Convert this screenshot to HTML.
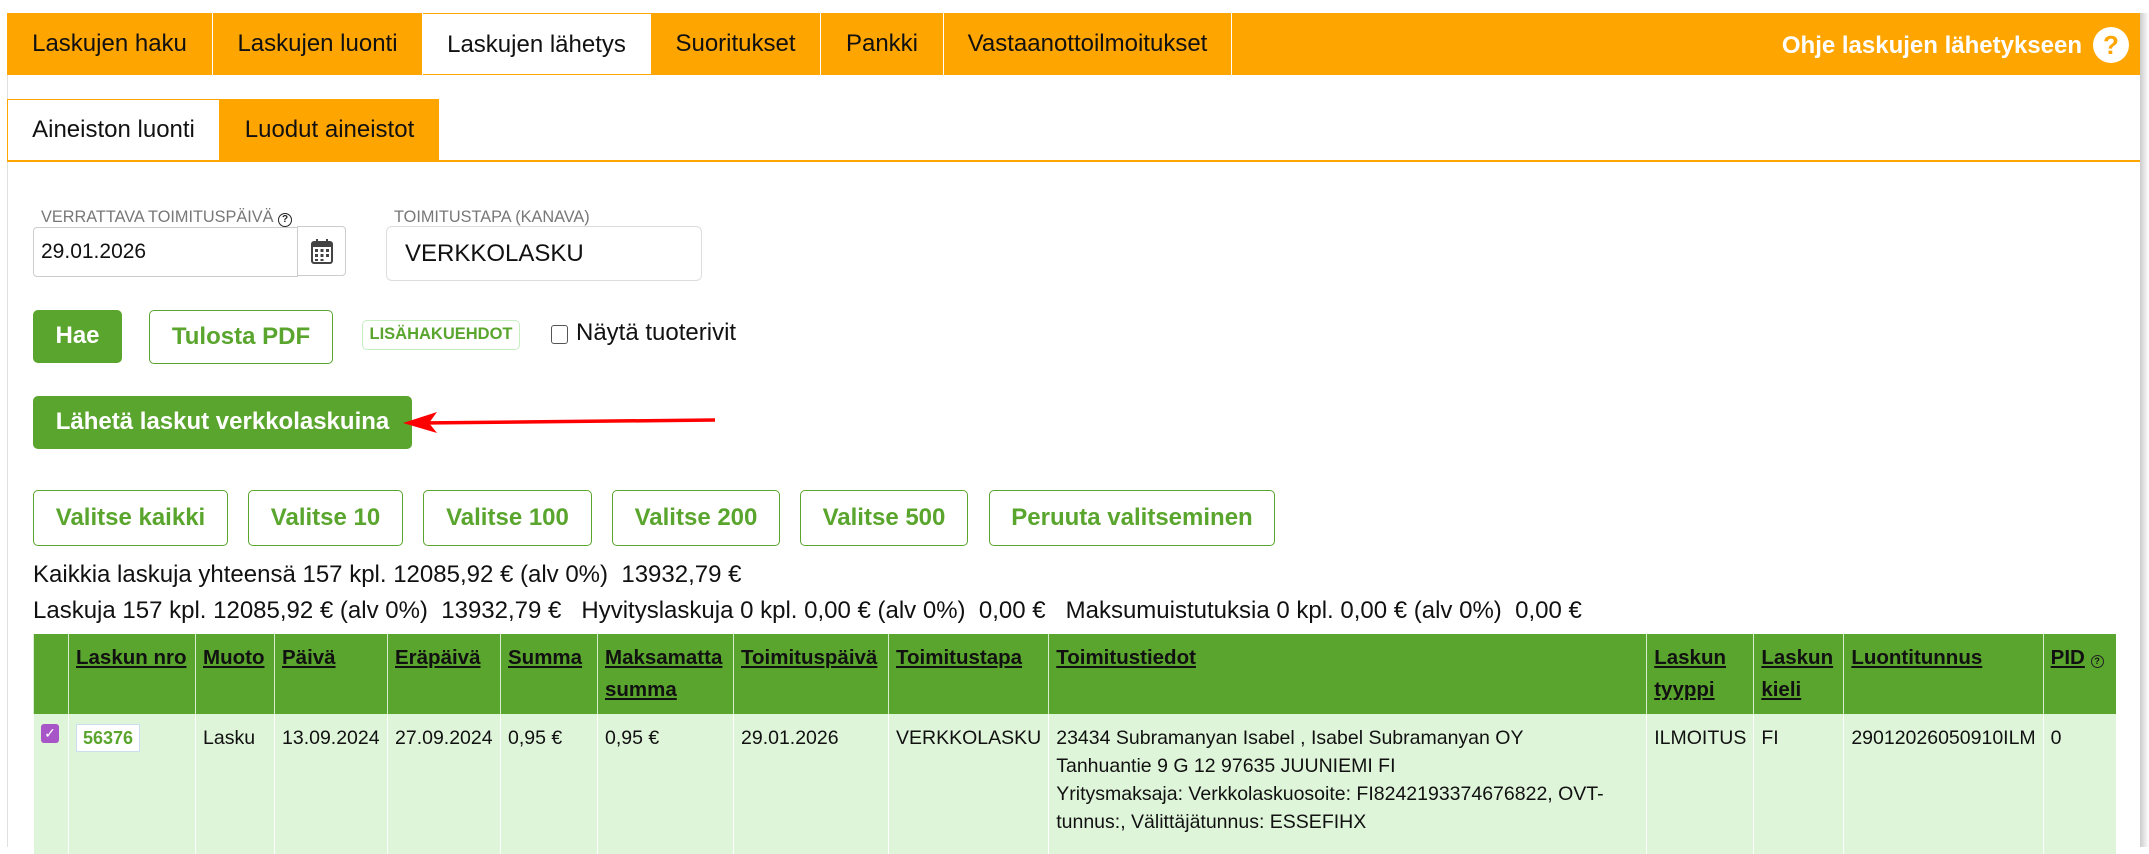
<!DOCTYPE html>
<html><head><meta charset="utf-8"><style>
*{box-sizing:border-box;margin:0;padding:0}
body{width:2149px;height:847px;overflow:hidden;background:#fff;font-family:"Liberation Sans",Arial,sans-serif;color:#111;position:relative}
.a{position:absolute}
.top{left:7px;top:13px;width:2133px;height:62px;background:#ffa500}
.tab{position:absolute;top:13px;height:62px;line-height:62px;font-size:24px;text-align:center;color:#111;border-right:1px solid #fff;white-space:nowrap}
.btn{position:absolute;border:1.5px solid #5aa52d;border-radius:5px;color:#5aa52d;font-weight:bold;font-size:24px;text-align:center;background:#fff;white-space:nowrap}
.g{background:#5aa52d;color:#fff}
.txt{font-size:24px;color:#111;white-space:nowrap}
table{position:absolute;left:33px;top:634px;border-collapse:collapse;font-size:19.5px}
th{background:#5aa52d;text-align:left;vertical-align:top;font-weight:bold;padding:8px 7px;height:78px;line-height:32px;border-left:1px solid #d8ecd0;font-size:20.5px}
th u{color:#111}
td{background:#dff5da;vertical-align:top;padding:10px 7px;line-height:28px;border-left:1px solid #fff;height:140px}
</style></head><body>
<div class="a" style="left:7px;top:13px;width:1px;height:834px;background:#e0e0e0"></div>
<div class="a" style="left:2140px;top:13px;width:9px;height:834px;background:linear-gradient(90deg,#ccc,#fff)"></div>
<div class="a top"></div>
<div class="tab" style="left:7px;width:206px">Laskujen haku</div>
<div class="tab" style="left:213px;width:210px">Laskujen luonti</div>
<div class="tab" style="left:423px;width:228px;background:#fff;top:14px;height:60px">Laskujen lähetys</div>
<div class="tab" style="left:651px;width:170px">Suoritukset</div>
<div class="tab" style="left:821px;width:123px">Pankki</div>
<div class="tab" style="left:944px;width:288px">Vastaanottoilmoitukset</div>
<div class="a" style="left:1700px;top:32px;font-size:24px;font-weight:bold;color:#fff;width:382px;text-align:right">Ohje laskujen lähetykseen</div>
<div class="a" style="left:2093px;top:27px;width:36px;height:36px;border-radius:50%;background:#fff;color:#ffa500;font-weight:bold;font-size:26px;text-align:center;line-height:36px">?</div>

<div class="a" style="left:7px;top:99px;width:213px;height:61px;border:1.5px solid #ffa500;border-bottom:none;font-size:24px;line-height:60px;text-align:center">Aineiston luonti</div>
<div class="a" style="left:220px;top:99px;width:219px;height:61px;background:#ffa500;font-size:24px;line-height:61px;text-align:center">Luodut aineistot</div>
<div class="a" style="left:7px;top:160px;width:2133px;height:2px;background:#ffa500"></div>

<div class="a" style="left:41px;top:208px;font-size:16.3px;color:#777;white-space:nowrap">VERRATTAVA TOIMITUSPÄIVÄ <span style="display:inline-block;width:14px;height:14px;border:1.5px solid #222;border-radius:50%;font-size:10px;line-height:11px;text-align:center;color:#222;font-weight:bold">?</span></div>
<div class="a" style="left:33px;top:227px;width:265px;height:50px;border:1px solid #ccc;border-radius:4px 0 0 4px;font-size:21px;line-height:48px;padding-left:7px">29.01.2026</div>
<div class="a" style="left:297px;top:226px;width:49px;height:50px;border:1px solid #ccc;border-radius:0 4px 4px 0"><svg width="22" height="26" viewBox="0 0 22 26" style="margin:11px 0 0 13px"><rect x="1" y="4" width="20" height="21" rx="2" fill="none" stroke="#444" stroke-width="2"/><rect x="1" y="4" width="20" height="5" fill="#444"/><rect x="5" y="1" width="2" height="5" fill="#444"/><rect x="15" y="1" width="2" height="5" fill="#444"/><g fill="#444"><rect x="4" y="11" width="3" height="3"/><rect x="9.5" y="11" width="3" height="3"/><rect x="15" y="11" width="3" height="3"/><rect x="4" y="16" width="3" height="3"/><rect x="9.5" y="16" width="3" height="3"/><rect x="15" y="16" width="3" height="3"/><rect x="4" y="21" width="3" height="2"/><rect x="9.5" y="21" width="3" height="2"/></g></svg></div>
<div class="a" style="left:394px;top:208px;font-size:16.3px;color:#777;white-space:nowrap">TOIMITUSTAPA (KANAVA)</div>
<div class="a" style="left:386px;top:226px;width:316px;height:55px;border:1px solid #ddd;border-radius:6px;font-size:24px;line-height:54px;padding-left:18px">VERKKOLASKU</div>

<div class="btn g" style="left:33px;top:310px;width:89px;height:53px;line-height:50px">Hae</div>
<div class="btn" style="left:149px;top:310px;width:184px;height:54px;line-height:51px">Tulosta PDF</div>
<div class="btn" style="left:362px;top:320px;width:158px;height:30px;line-height:27px;font-size:16.5px;border-color:#c6eec0">LISÄHAKUEHDOT</div>
<div class="a" style="left:551px;top:325px;width:17px;height:19px;border:1.5px solid #555;border-radius:3px"></div>
<div class="a txt" style="left:576px;top:319px">Näytä tuoterivit</div>

<div class="btn g" style="left:33px;top:396px;width:379px;height:53px;line-height:50px">Lähetä laskut verkkolaskuina</div>
<svg class="a" style="left:395px;top:405px" width="330" height="36"><line x1="25" y1="18" x2="320" y2="15" stroke="#f00" stroke-width="3.5"/><polygon points="8,18 42,7 34,18 42,28" fill="#f00"/></svg>

<div class="btn" style="left:33px;top:490px;width:195px;height:56px;line-height:53px">Valitse kaikki</div>
<div class="btn" style="left:248px;top:490px;width:155px;height:56px;line-height:53px">Valitse 10</div>
<div class="btn" style="left:423px;top:490px;width:169px;height:56px;line-height:53px">Valitse 100</div>
<div class="btn" style="left:612px;top:490px;width:168px;height:56px;line-height:53px">Valitse 200</div>
<div class="btn" style="left:800px;top:490px;width:168px;height:56px;line-height:53px">Valitse 500</div>
<div class="btn" style="left:989px;top:490px;width:286px;height:56px;line-height:53px">Peruuta valitseminen</div>

<div class="a txt" style="left:33px;top:561px">Kaikkia laskuja yhteensä 157 kpl. 12085,92 € (alv 0%)&nbsp; 13932,79 €</div>
<div class="a txt" style="left:33px;top:597px">Laskuja 157 kpl. 12085,92 € (alv 0%)&nbsp; 13932,79 €&nbsp;&nbsp; Hyvityslaskuja 0 kpl. 0,00 € (alv 0%)&nbsp; 0,00 €&nbsp;&nbsp; Maksumuistutuksia 0 kpl. 0,00 € (alv 0%)&nbsp; 0,00 €</div>

<table>
<tr>
<th style="width:35px"></th>
<th style="width:127px"><u>Laskun nro</u></th>
<th style="width:79px"><u>Muoto</u></th>
<th style="width:113px"><u>Päivä</u></th>
<th style="width:113px"><u>Eräpäivä</u></th>
<th style="width:97px"><u>Summa</u></th>
<th style="width:136px"><u>Maksamatta summa</u></th>
<th style="width:155px"><u>Toimituspäivä</u></th>
<th style="width:160px"><u>Toimitustapa</u></th>
<th style="width:598px"><u>Toimitustiedot</u></th>
<th style="width:106px"><u>Laskun tyyppi</u></th>
<th style="width:90px"><u>Laskun kieli</u></th>
<th style="width:199px"><u>Luontitunnus</u></th>
<th style="width:73px"><u>PID</u> <span style="display:inline-block;width:13px;height:13px;border:1.5px solid #222;border-radius:50%;font-size:9px;line-height:10px;text-align:center">?</span></th>
</tr>
<tr>
<td><div style="width:18px;height:19px;background:#a855c8;border-radius:3px;color:#fff;font-size:14px;line-height:19px;text-align:center;margin-top:0">✓</div></td>
<td><span style="display:inline-block;background:#fff;border:1px solid #cde;padding:0 6px;color:#5aa52d;font-weight:bold;font-size:18px;line-height:26px">56376</span></td>
<td>Lasku</td><td>13.09.2024</td><td>27.09.2024</td><td>0,95 €</td><td>0,95 €</td><td>29.01.2026</td><td>VERKKOLASKU</td>
<td>23434 Subramanyan Isabel , Isabel Subramanyan OY<br>Tanhuantie 9 G 12 97635 JUUNIEMI FI<br>Yritysmaksaja: Verkkolaskuosoite: FI8242193374676822, OVT-<br>tunnus:, Välittäjätunnus: ESSEFIHX</td>
<td>ILMOITUS</td><td>FI</td><td>29012026050910ILM</td><td>0</td>
</tr>
</table>
</body></html>
